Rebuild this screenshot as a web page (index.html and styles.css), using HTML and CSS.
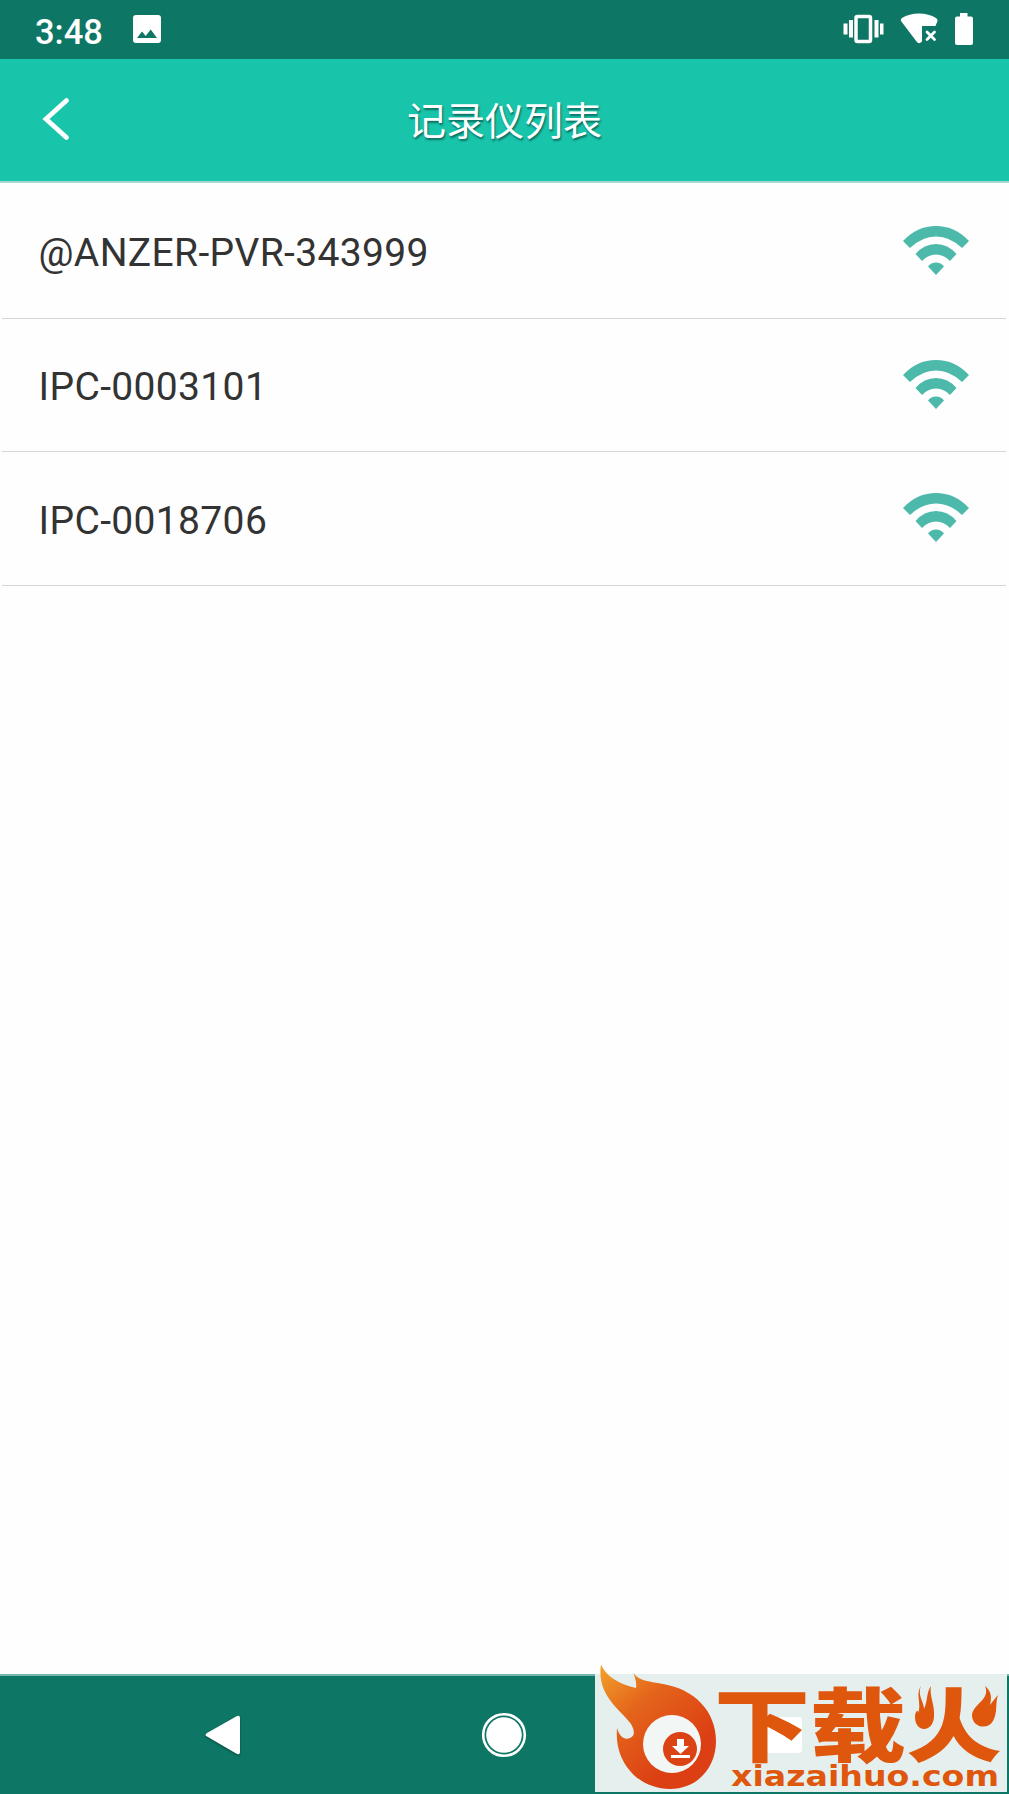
FILE: index.html
```html
<!DOCTYPE html>
<html lang="zh-CN">
<head>
<meta charset="utf-8">
<title>记录仪列表</title>
<link rel="stylesheet" href="styles.css">
</head>
<body>
<svg width="0" height="0" class="defs">
  <symbol id="wifi" viewBox="0 0 66 50">
    <path d="M0 15Q14 0 33 0T66 15L59 22Q47 10.500 33 10.500T7 22Z"/>
    <path d="M12.500 28Q21 18 33 18T53.500 28L47 35Q41 28.500 33 28.500T19 35Z"/>
    <path d="M25 40.500Q28 36.500 33 36.500T41 40.500L33 49Z"/>
  </symbol>
</svg>
<div class="screen">
  <div class="status">
    <span class="clock">3:48</span>
    <svg class="photo" width="28" height="28" viewBox="0 0 28 28"><path fill-rule="evenodd" d="M3 0H25Q28 0 28 3V25Q28 28 25 28H3Q0 28 0 25V3Q0 0 3 0ZM4 23H24L17.700 14.500L12.700 21L9 16.500Z"/></svg>
    <svg class="indicators" width="132" height="34" viewBox="842 12 132 34">
      <path d="M843.500 23.500h4v11h-4zM849 20h4v17.500h-4zM874.500 20h4v17.500h-4zM880 23.500h3.500v11H880z"/>
      <rect x="856" y="16.500" width="14.500" height="25" rx="1.500" fill="none" stroke="#fff" stroke-width="3.500"/>
      <path d="M901 21Q900 19 902 18Q909 13.500 919 13.500T936 18Q938 19.500 937.500 21L935.500 26H922V41.500Q919 45 916.500 41.500Z"/>
      <path d="M927 32L934.500 39.500M934.500 32L927 39.500" stroke="#fff" stroke-width="2.800" stroke-linecap="round"/>
      <path d="M960 13H967.500V16.500H971Q973 16.500 973 18.500V43Q973 45 971 45H957Q955 45 955 43V18.500Q955 16.500 957 16.500H960Z"/>
    </svg>
  </div>
  <header class="header">
    <svg class="back" width="30" height="44" viewBox="0 0 30 44"><path d="M25.500 3.500L5 22L25.500 40.500" fill="none" stroke="#fff" stroke-width="4.800" stroke-linecap="round" stroke-linejoin="miter"/></svg>
    <h1>记录仪列表</h1>
  </header>
  <ul class="list">
    <li><span>@ANZER-PVR-343999</span><svg class="wifi"><use href="#wifi"/></svg></li>
    <li><span>IPC-0003101</span><svg class="wifi"><use href="#wifi"/></svg></li>
    <li><span>IPC-0018706</span><svg class="wifi"><use href="#wifi"/></svg></li>
  </ul>
  <nav class="nav">
    <svg class="nav-back" width="38" height="44" viewBox="0 0 38 44"><path d="M3 20L33 3Q36 2 36 5V39Q36 42 33 41L3 23.500Q0 22 3 20Z"/></svg>
    <svg class="home" width="46" height="46" viewBox="0 0 46 46"><circle cx="23" cy="23" r="20.800" fill="none" stroke="#fff" stroke-width="2.600"/><circle cx="23" cy="23" r="17.800"/></svg>
  </nav>
  <svg class="watermark" width="412" height="130" viewBox="595 1662 412 130">
    <defs><linearGradient id="flame" x1="0" y1="0" x2=".65" y2=".8"><stop offset="0" stop-color="#f3a12c"/><stop offset=".45" stop-color="#e4641b"/><stop offset="1" stop-color="#dc3f13"/></linearGradient></defs>
    <rect x="595" y="1674" width="412" height="118" fill="#e5f0ee"/>
    <rect x="764" y="1717" width="38" height="36" rx="4" fill="#fff"/>
    <path fill="url(#flame)" d="M601 1664.500C606 1676 618 1684 636 1688C637 1683 635 1678 633.500 1673C639 1681 648 1681 663 1684C694 1689 716 1711 716 1741C716 1768 697 1789 670 1789C639 1789 614 1763 617 1728C620 1738 625 1740 630 1738C635 1736 635 1731 631 1724C622 1711 596 1696 601 1664.500Z"/>
    <circle cx="672" cy="1744" r="29" fill="#f2f7f5"/>
    <circle cx="680" cy="1749" r="17" fill="#dc4314"/>
    <path fill="#fff" d="M677 1739h7v7h5l-8.500 8l-8.500-8h5zM671 1755h19v3h-19z"/>
    <text class="brand" x="714" y="1755" textLength="288" lengthAdjust="spacingAndGlyphs">下载火</text>
    <path fill="#e5f0ee" d="M908 1684H940V1712L931 1738H908ZM967 1684H1003V1732H978L967 1722Z"/>
    <path class="ember" d="M921 1686C917 1695 924 1702 924 1709C928 1701 926 1693 931 1686C929 1696 935 1704 934 1717C933 1733 915 1733 915 1717C915 1712 918 1708 918 1713C922 1705 915 1694 921 1686Z"/>
    <path class="ember" d="M985 1686C993 1692 991 1701 990 1705C994 1700 996 1697 998 1695C995 1703 998 1712 993 1721C988 1730 973 1728 972 1716C972 1704 991 1700 985 1686Z"/>
    <text class="domain" x="731" y="1786" textLength="268" lengthAdjust="spacingAndGlyphs">xiazaihuo.com</text>
  </svg>
</div>
</body>
</html>
```
FILE: styles.css
```css
* { box-sizing: border-box; }
body { margin: 0; background: #fefefe; font-family: Roboto, "Noto Sans CJK SC", sans-serif; }
.defs { position: absolute; }
svg { display: block; flex: none; fill: #fff; }
.screen { position: relative; display: flex; flex-direction: column; width: 1009px; height: 1794px; overflow: hidden; }
.status { display: flex; align-items: center; height: 59px; padding: 0 35px; background: #0e7665; color: #fff; }
.clock { width: 98px; padding-top: 4px; font-size: 34.500px; font-weight: 500; line-height: 40px; }
.photo { margin-bottom: 1px; }
.indicators { margin-left: auto; margin-bottom: 1px; }
.header { display: grid; grid-template-columns: 60px 1fr 60px; align-items: center; height: 124px; padding: 0 40px; background: #18c4aa; border-bottom: 2px solid #a5d8d0; }
.header h1 { margin: 0; padding-top: 3px; text-align: center; color: #fff; font-size: 39px; font-weight: 400; line-height: 50px; text-shadow: 1px 2px 2px rgba(0, 0, 0, .45); }
.back { margin: 0 0 2px 1px; }
.list { flex: 1; margin: 0; padding: 2px 3px 0 2px; list-style: none; }
.list li { display: flex; align-items: center; justify-content: space-between; height: 133.700px; padding: 0 37px 0 36.500px; border-bottom: 1.500px solid #d6d6d6; color: #333; font-size: 39px; letter-spacing: .35px; }
.list span { padding-top: 4px; }
.wifi { width: 66px; height: 50px; margin-bottom: 1px; fill: #4db9ab; }
.nav { display: flex; align-items: center; height: 120px; border-top: 2px solid #72b9ab; background: #0e7665; }
.nav-back { margin-left: 204px; filter: drop-shadow(0 1px 1px rgba(0, 0, 0, .4)); }
.home { margin-left: 239px; }
.watermark { position: absolute; right: 2px; bottom: 2px; }
.brand { fill: #df560d; font: 900 80px "Noto Sans CJK SC", sans-serif; }
.ember { fill: #df560d; }
.domain { fill: #df560d; font: 700 29px "DejaVu Sans", sans-serif; }
```
